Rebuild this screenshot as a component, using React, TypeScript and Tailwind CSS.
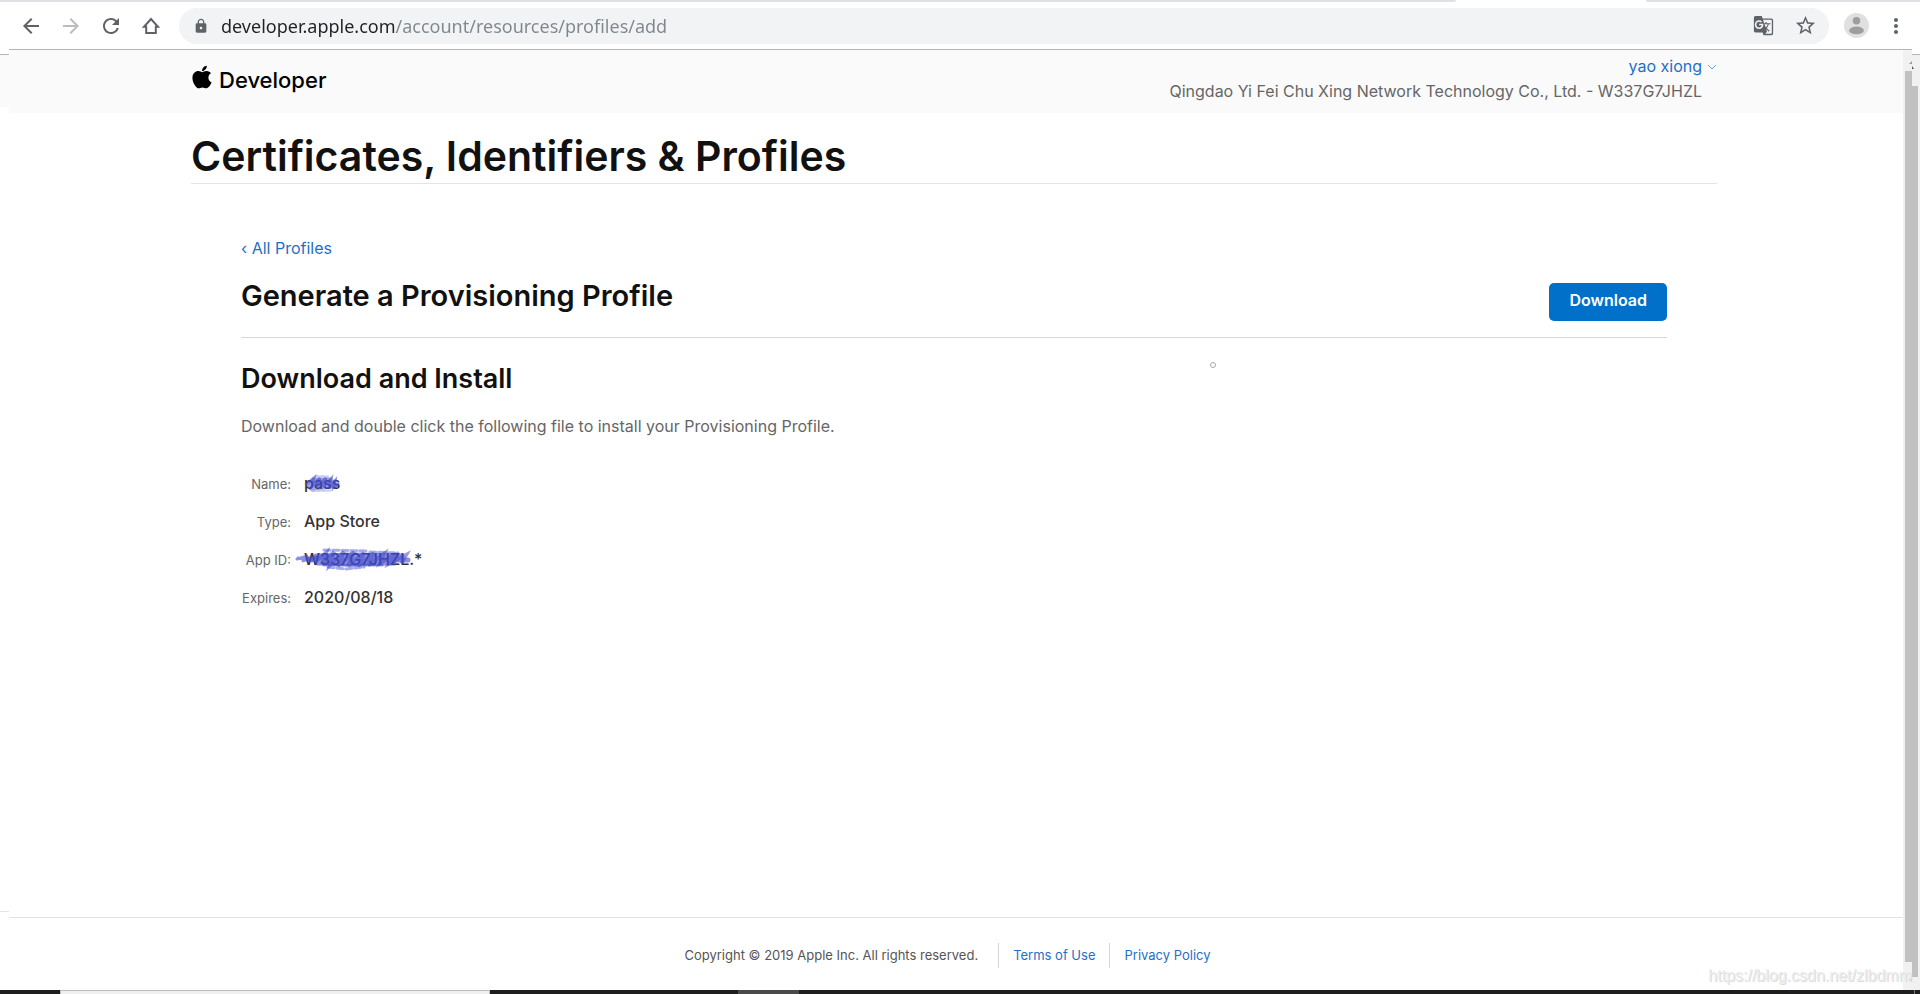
import { useState } from "react";
import { FaApple } from "react-icons/fa";
import { MdArrowBack, MdArrowForward, MdGTranslate, MdLock, MdMoreVert, MdRefresh, MdStarBorder } from "react-icons/md";

const details = [
  { label: "Name", value: "pass", mark: "short" },
  { label: "Type", value: "App Store" },
  { label: "App ID", value: "W337G7JHZL.*", mark: "long" },
  { label: "Expires", value: "2020/08/18" },
];

const HomeIcon = () => (
  <svg width="24" height="24" viewBox="0 0 24 24" fill="none" stroke="currentColor" strokeWidth="2" aria-hidden="true">
    <path d="M12 5 5 12.8h2.2V19h9.6v-6.2H19z" />
  </svg>
);

const Avatar = () => (
  <svg width="25" height="25" viewBox="0 0 25 25" aria-hidden="true">
    <circle cx="12.5" cy="12.5" r="12.5" fill="#e0e0e0" />
    <circle cx="12.5" cy="7.7" r="3.8" fill="#9e9e9e" />
    <ellipse cx="12.5" cy="17.4" rx="7.4" ry="3.9" fill="#9e9e9e" />
  </svg>
);

// Blue marker strokes over the private values
const Scribble = ({ kind }) =>
  kind === "short" ? (
    <svg
      className="absolute top-2 left-0"
      width="40"
      height="22"
      viewBox="0 0 40 22"
      fill="none"
      stroke="#3f48cc"
      strokeLinecap="round"
      aria-hidden="true"
    >
      <path d="M4 10 10 5 8 13 16 5 13 14 22 5 19 14 27 6 25 15 31 8 30 14 34 11" strokeWidth="3" opacity=".6" />
      <path d="M3 12 31 9M5 14 34 12M7 16 31 14M9 6 27 6M6 9 32 8" strokeWidth="3" opacity=".5" />
      <path d="M8 18 28 17.5M12 3 24 3.5" strokeWidth="2" opacity=".3" strokeDasharray="3 2" />
    </svg>
  ) : (
    <svg
      className="absolute top-1 -left-2.5"
      width="124"
      height="28"
      viewBox="0 0 124 28"
      fill="none"
      stroke="#3f48cc"
      strokeLinecap="round"
      aria-hidden="true"
    >
      <path d="M14 14 34 14 72 15 114 15M22 11 58 10 108 11M24 18 60 19 100 18" strokeWidth="5" opacity=".6" />
      <path
        d="M22 16 32 8 28 19 40 7 36 20 50 7 44 21 60 7 54 21 70 8 64 21 80 8 74 20 90 9 86 18 102 9 96 18 112 10 108 17"
        strokeWidth="4"
        opacity=".55"
      />
      <path d="M30 5 52 5.5 72 6M34 22 52 24 70 22M76 7 104 8M30 20 88 20" strokeWidth="3" opacity=".45" strokeDasharray="6 3" />
      <path d="M3 14 14 11 8 16 22 12M4 13 18 16" strokeWidth="3" opacity=".6" />
    </svg>
  );

const Toolbar = () => {
  const [url, setUrl] = useState("developer.apple.com/account/resources/profiles/add");

  return (
    <div>
      <div className="flex h-0.5 bg-white">
        <div className="flex-1 rounded-br-sm bg-[#dee1e6]" />
        <div className="w-[190px]" />
        <div className="w-[274px] rounded-bl-sm bg-[#dee1e6]" />
      </div>
      <div className="flex h-[47px] items-center bg-white pr-1 pl-[11px] text-[#5f6368]">
        <button className="flex w-10 justify-center" aria-label="Back">
          <MdArrowBack size={24} />
        </button>
        <button className="flex w-10 justify-center text-[#babcbe]" aria-label="Forward">
          <MdArrowForward size={24} />
        </button>
        <button className="flex w-10 justify-center" aria-label="Reload">
          <MdRefresh size={24} />
        </button>
        <button className="flex w-10 justify-center" aria-label="Home">
          <HomeIcon />
        </button>
        <div className="ml-2 flex h-9 flex-1 items-center rounded-full bg-[#f1f3f4] pr-3 pl-[14px]">
          <MdLock size={16} />
          <input
            type="text"
            aria-label="Address"
            value={url}
            onChange={(e) => setUrl(e.target.value)}
            className="ml-3 flex-1 bg-[linear-gradient(90deg,#202124_175px,#80868b_175px)] bg-clip-text font-['Noto_Sans',sans-serif] text-lg text-transparent caret-black outline-none"
          />
          <button aria-label="Translate this page">
            <MdGTranslate size={21} />
          </button>
          <button className="ml-5" aria-label="Bookmark this page">
            <MdStarBorder size={23} />
          </button>
        </div>
        <button className="ml-[15px]" aria-label="Profile">
          <Avatar />
        </button>
        <button className="ml-[7px] flex w-10 justify-center" aria-label="Menu">
          <MdMoreVert size={24} />
        </button>
      </div>
    </div>
  );
};

const Header = () => (
  <header className="bg-[#fafafa] pr-1">
    <div className="mx-auto flex h-[63px] max-w-[1526px] justify-between">
      <a href="#" className="flex items-center gap-1 pb-0.5 text-[22px] font-medium text-black">
        <FaApple size={26} className="-ml-0.5 mb-2" />
        Developer
      </a>
      <div className="pt-1 text-right leading-[25px] text-[#666]">
        <button className="ml-auto flex items-center gap-[5px] text-[#1f6fc8]">
          yao xiong
          <svg width="10" height="6" viewBox="0 0 10 6" fill="none" stroke="#6f9fda" aria-hidden="true">
            <path d="M1 1l4 4 4-4" />
          </svg>
        </button>
        <p className="pr-[15px]">Qingdao Yi Fei Chu Xing Network Technology Co., Ltd. - W337G7JHZL</p>
      </div>
    </div>
  </header>
);

const Footer = () => (
  <footer className="mt-auto flex justify-center border-t border-[#e3e3e3] pt-[25px] pr-[17px] pb-[22px] text-[13px] leading-[25px]">
    <p className="pr-5 text-[#555]">Copyright © 2019 Apple Inc. All rights reserved.</p>
    <a href="#" className="border-l border-[#d6d6d6] px-[14px] text-[#1f6fc8]">
      Terms of Use
    </a>
    <a href="#" className="border-l border-[#d6d6d6] pl-[14px] text-[#1f6fc8]">
      Privacy Policy
    </a>
  </footer>
);

const App = () => {
  return (
    <div className="relative flex min-h-screen flex-col bg-white font-['Inter',sans-serif] text-base">
      <Toolbar />

      <div className="flex flex-1">
        {/* Left window edge */}
        <div className="flex w-[9px] flex-col pt-[5px]">
          <div className="h-[53px] border-t border-[#b5b5b5] bg-[#fafafa]" />
          <div className="mt-auto h-[79px] border-t border-[#e3e3e3]" />
        </div>

        <div className="flex flex-1 flex-col border-t border-[#b5b5b5]">
          <Header />
          <main className="pr-1">
            <div className="mx-auto max-w-[1526px]">
              <h1 className="mt-[18px] border-b border-[#e3e3e3] pb-0.5 text-[41px] leading-[50px] font-semibold text-[#111]">
                Certificates, Identifiers &amp; Profiles
              </h1>
              <div className="px-[50px] pt-[52px]">
                <a href="#" className="text-[#1f6fc8]">
                  ‹ All Profiles
                </a>
                <div className="mt-4 flex items-start justify-between border-b border-[#d6d6d6] pb-4">
                  <h2 className="text-[29px] leading-10 font-semibold text-[#111]">Generate a Provisioning Profile</h2>
                  <button className="mt-[7px] rounded-[5px] bg-[#0070c9] px-5 pt-[5px] pb-[9px] font-semibold text-white">
                    Download
                  </button>
                </div>
                <h3 className="mt-[21px] text-[27px] leading-10 font-semibold text-[#111]">Download and Install</h3>
                <p className="mt-[15px] text-[#666]">
                  Download and double click the following file to install your Provisioning Profile.
                </p>
                <dl className="mt-[27px] leading-9">
                  {details.map((item) => (
                    <div key={item.label} className="flex h-[38px] items-baseline gap-[13px]">
                      <dt className="w-[50px] text-right text-[13px] text-[#666]">{item.label}:</dt>
                      <dd className="relative font-medium text-[#333]">
                        {item.value}
                        {item.mark && <Scribble kind={item.mark} />}
                      </dd>
                    </div>
                  ))}
                </dl>
              </div>
            </div>
          </main>
          <Footer />
        </div>

        {/* Scrollbar */}
        <div className="flex w-[9px] flex-col items-end border-t border-[#b5b5b5] bg-[#f1f1f1]">
          <svg width="3" height="21" viewBox="0 0 3 21" fill="#999" aria-hidden="true">
            <path d="M0 14 3 11v3z" />
          </svg>
          <div className="w-[7px] flex-1 bg-[#c1c1c1]" />
          <svg width="3" height="28" viewBox="0 0 3 28" fill="#505050" aria-hidden="true">
            <path d="M0 17h3v3z" />
          </svg>
        </div>
        <div className="flex w-2 flex-col pt-[5px]">
          <div className="flex flex-1 flex-col border-t border-[#b5b5b5] bg-[#f1f1f1]">
            <svg width="8" height="31" viewBox="0 0 8 31" fill="#505050" aria-hidden="true">
              <path d="M0 11v3h2z" />
            </svg>
            <div className="mb-[13px] w-1.5 flex-1 bg-[#c1c1c1]" />
          </div>
        </div>
      </div>

      {/* Top edge of the taskbar */}
      <div className="flex h-1 bg-[#1e1e1e]">
        <div className="ml-[60px] w-[430px] border-x border-t border-[#bcbcbc] bg-[#f0f0f0]" />
        <div className="ml-[248px] w-[61px] bg-[#4a4a4a]" />
        <div className="mr-[5px] ml-auto w-px bg-[#777]" />
      </div>

      {/* Mouse pointer dot */}
      <div className="absolute top-[362px] left-[63%] size-[6px] rounded-full border border-[#a9a5b5]" />
      <span className="absolute right-2 bottom-[6px] font-['Liberation_Sans',sans-serif] text-[#ececec] [text-shadow:1px_1px_0_#dcdcdc]">
        https://blog.csdn.net/zlbdmm
      </span>
    </div>
  );
};

export default App;
